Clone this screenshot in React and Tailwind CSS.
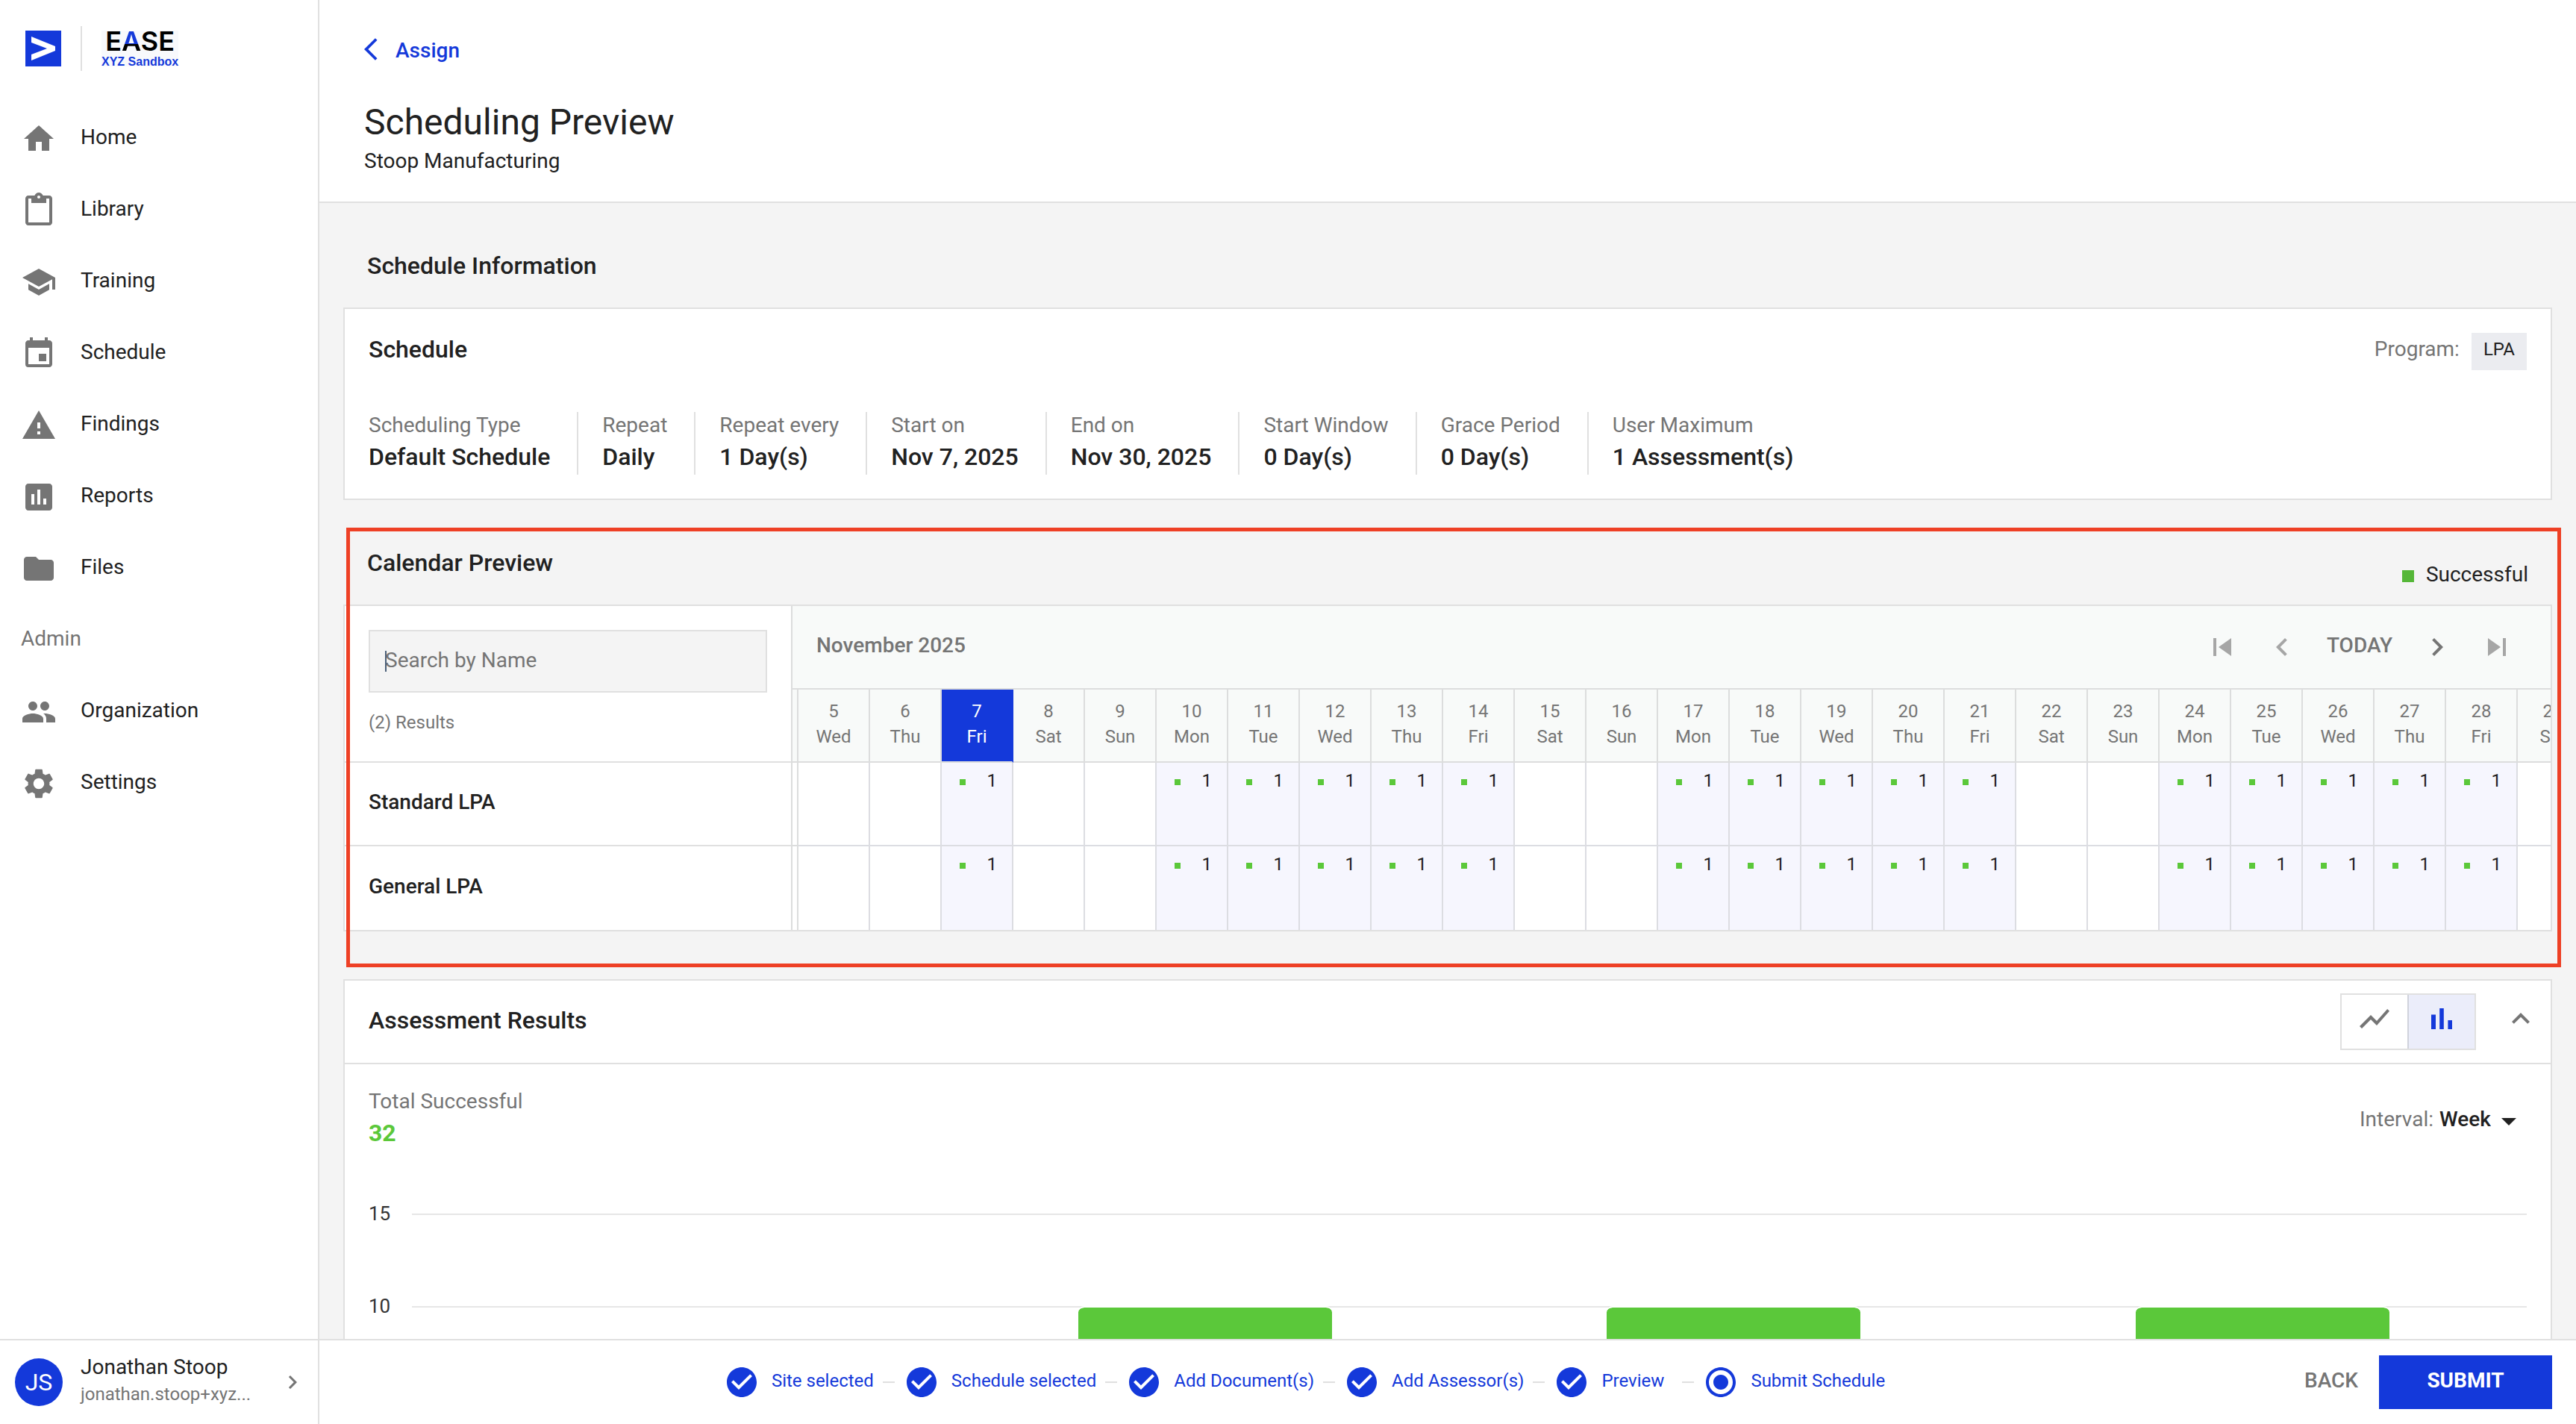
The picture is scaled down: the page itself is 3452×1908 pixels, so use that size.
import React, { useState } from "react";
import {
    MdArrowBackIos,
    MdArrowDropDown,
    MdAssessment,
    MdCheckCircle,
    MdChevronLeft,
    MdChevronRight,
    MdContentPaste,
    MdEvent,
    MdExpandLess,
    MdFolder,
    MdHome,
    MdPeople,
    MdRadioButtonChecked,
    MdSchool,
    MdSettings,
    MdShowChart,
    MdSkipNext,
    MdSkipPrevious,
    MdWarning,
} from "react-icons/md";

const mainLinks = [
    { label: "Home", Icon: MdHome },
    { label: "Library", Icon: MdContentPaste },
    { label: "Training", Icon: MdSchool },
    { label: "Schedule", Icon: MdEvent },
    { label: "Findings", Icon: MdWarning },
    { label: "Reports", Icon: MdAssessment },
    { label: "Files", Icon: MdFolder },
];

const adminLinks = [
    { label: "Organization", Icon: MdPeople },
    { label: "Settings", Icon: MdSettings },
];

const scheduleInfo = [
    { label: "Scheduling Type", value: "Default Schedule" },
    { label: "Repeat", value: "Daily" },
    { label: "Repeat every", value: "1 Day(s)" },
    { label: "Start on", value: "Nov 7, 2025" },
    { label: "End on", value: "Nov 30, 2025" },
    { label: "Start Window", value: "0 Day(s)" },
    { label: "Grace Period", value: "0 Day(s)" },
    { label: "User Maximum", value: "1 Assessment(s)" },
];

const weekdays = ["Sun", "Mon", "Tue", "Wed", "Thu", "Fri", "Sat"];

// Nov 5 - Nov 29, the 1st is a Saturday
const days = Array.from({ length: 25 }, (_, i) => {
    const date = i + 5;
    const weekday = weekdays[(date + 5) % 7];
    return {
        date,
        weekday,
        today: date === 7,
        scheduled: date >= 7 && weekday !== "Sat" && weekday !== "Sun",
    };
});

const documents = ["Standard LPA", "General LPA"];

const weeklyTotals = [2, 10, 10, 10];
const ticks = [15, 10, 5];

const steps = ["Site selected", "Schedule selected", "Add Document(s)", "Add Assessor(s)", "Preview", "Submit Schedule"];

function BarsIcon({ className }) {
    return (
        <svg viewBox="0 0 24 24" fill="currentColor" className={className}>
            <path d="M5 9.2h3V19H5zM10.6 5h2.8v14h-2.8zm5.6 8H19v6h-2.8z" />
        </svg>
    );
}

function NavLink({ label, Icon }) {
    return (
        <a href="#" className="flex h-24 items-center gap-8 pl-7">
            <Icon className="size-12 text-[#757575]" />
            <span className="pb-1">{label}</span>
        </a>
    );
}

function Sidebar() {
    return (
        <aside className="flex w-[428px] shrink-0 flex-col border-r-2 border-[#e0e0e0] bg-white">
            <div className="flex h-[138px] items-start gap-[26px] pt-[35px] pl-[34px]">
                <svg viewBox="0 0 48 48" className="mt-1.5 size-12">
                    <rect width="48" height="48" fill="#1439da" />
                    <path d="M8 8l32 13v6L8 40v-8l21-8L8 16z" fill="#fff" />
                </svg>
                <div className="h-[60px] w-0.5 bg-[#e0e0e0]" />
                <div className="mt-1.5 flex h-12 flex-col items-center bg-[#f8f9fc]">
                    <div className="font-['Inter',sans-serif] text-[36px] leading-7 font-semibold text-black">
                        E
                        <span className="bg-linear-to-b from-[#1439da] from-60% to-black to-60% bg-clip-text text-transparent">A</span>
                        SE
                    </div>
                    <div className="font-['Liberation_Sans',sans-serif] text-base leading-7 font-bold text-[#1439da]">XYZ Sandbox</div>
                </div>
            </div>

            <nav className="flex-1 overflow-hidden">
                {mainLinks.map((link) => (
                    <NavLink key={link.label} {...link} />
                ))}
                <div className="flex h-24 items-center pb-1 pl-7 text-[#757575]">Admin</div>
                {adminLinks.map((link) => (
                    <NavLink key={link.label} {...link} />
                ))}
            </nav>

            <button type="button" className="flex h-[114px] items-center border-t-2 border-[#e0e0e0] pr-4 pl-5 text-left">
                <span className="flex size-16 shrink-0 items-center justify-center rounded-full bg-[#1439da] text-[32px] text-white">JS</span>
                <span className="ml-6 flex-1 pb-1 leading-9">
                    <span className="block">Jonathan Stoop</span>
                    <span className="block text-2xl leading-9 text-[#757575]">jonathan.stoop+xyz...</span>
                </span>
                <MdChevronRight className="size-9 text-[#757575]" />
            </button>
        </aside>
    );
}

function ScheduleCard() {
    return (
        <section className="border-2 border-[#e0e0e0] bg-white p-8">
            <div className="flex h-[50px] items-center justify-between">
                <h3 className="pb-1.5 text-[32px] font-medium">Schedule</h3>
                <div className="flex items-center gap-4">
                    <span className="pb-1.5 text-[#757575]">Program:</span>
                    <span className="flex h-[50px] items-center bg-[#ebecf0] px-4 pb-1.5 text-2xl">LPA</span>
                </div>
            </div>
            <dl className="mt-14 flex divide-x-2 divide-[#e0e0e0]">
                {scheduleInfo.map((item) => (
                    <div key={item.label} className="pr-9 pl-8 first:pl-0">
                        <dt className="leading-9 text-[#757575]">{item.label}</dt>
                        <dd className="text-[32px] leading-12 font-medium">{item.value}</dd>
                    </div>
                ))}
            </dl>
        </section>
    );
}

function CalendarToolbar() {
    return (
        <div className="flex h-28 items-center justify-between border-b-2 border-[#dcdddd] bg-[#f8faf9] pr-12 pl-8 text-[#757575]">
            <h4 className="pb-1 font-medium">November 2025</h4>
            <div className="flex items-center gap-8">
                <button type="button" aria-label="First" disabled className="text-[#a6a6a6]">
                    <MdSkipPrevious className="size-12" />
                </button>
                <button type="button" aria-label="Previous" disabled className="text-[#a6a6a6]">
                    <MdChevronLeft className="size-12" />
                </button>
                <button type="button" className="px-1 pb-1 font-medium">TODAY</button>
                <button type="button" aria-label="Next">
                    <MdChevronRight className="size-12" />
                </button>
                <button type="button" aria-label="Last" disabled className="text-[#a6a6a6]">
                    <MdSkipNext className="size-12" />
                </button>
            </div>
        </div>
    );
}

function CalendarPreview() {
    const [search, setSearch] = useState("");
    const rows = documents.filter((name) => name.toLowerCase().includes(search.toLowerCase()));

    return (
        <section className="relative pt-[60px]">
            <div className="flex h-20 items-start justify-between px-8">
                <h2 className="text-[32px] leading-12 font-medium">Calendar Preview</h2>
                <div className="mt-5 flex items-center gap-4 leading-10">
                    <span className="mt-1 size-4 bg-[#55b738]" />
                    Successful
                </div>
            </div>

            <div className="flex border-2 border-[#e0e0e0] bg-white">
                <div className="w-[600px] shrink-0 border-r-2 border-[#dcdddd]">
                    <div className="h-[210px] border-b-2 border-[#e0e0e0] px-8 pt-8">
                        <div className="relative">
                            <input
                                type="text"
                                aria-label="Search by Name"
                                placeholder="Search by Name"
                                value={search}
                                onChange={(e) => setSearch(e.target.value)}
                                className="block h-[84px] w-full border-2 border-[#e0e0e0] bg-[#f4f4f4] px-5 pb-1 placeholder:text-[#757575] placeholder:opacity-100"
                            />
                            <span className="absolute top-7 left-[22px] h-7 w-0.5 bg-[#4a5f78]" />
                        </div>
                        <p className="mt-5 text-2xl leading-10 text-[#757575]">({rows.length}) Results</p>
                    </div>
                    {rows.map((name) => (
                        <div key={name} className="flex h-28 items-center border-b-2 border-[#e0e0e0] pb-1 pl-8 font-medium last:border-b-0">
                            {name}
                        </div>
                    ))}
                </div>

                <div className="min-w-0 flex-1 overflow-hidden">
                    <CalendarToolbar />
                    <table className="w-[2408px] table-fixed border-separate border-spacing-0 text-2xl">
                        <colgroup>
                            <col className="w-2" />
                            {days.map((day) => (
                                <col key={day.date} className="w-24" />
                            ))}
                        </colgroup>
                        <thead>
                            <tr className="h-[98px]">
                                <td className="border-r-2 border-b-2 border-[#dcdddd] bg-[#f8faf9] p-0" />
                                {days.map((day) => (
                                    <th
                                        key={day.date}
                                        scope="col"
                                        className={`border-b-2 border-b-[#dcdddd] px-0 pt-3 pb-0 align-top leading-[34px] font-normal border-r-2 ${
                                            day.today ? "border-r-[#1439da] bg-[#1439da] text-white" : "border-r-[#dcdddd] bg-[#f8faf9] text-[#757575]"
                                        }`}
                                    >
                                        {day.date}
                                        <br />
                                        {day.weekday}
                                    </th>
                                ))}
                            </tr>
                        </thead>
                        <tbody>
                            {rows.map((name, i) => (
                                <tr key={name} className="h-28">
                                    <td className={`border-r-2 border-[#dcdddd] p-0 ${i < rows.length - 1 ? "border-b-2" : ""}`} />
                                    {days.map((day) => (
                                        <td
                                            key={day.date}
                                            className={`border-r-2 border-[#dcdde2] p-0 align-top ${i < rows.length - 1 ? "border-b-2" : ""} ${
                                                day.scheduled ? "bg-[#f6f6fe]" : ""
                                            }`}
                                        >
                                            {day.scheduled && (
                                                <div className="flex items-center justify-between pt-2 pr-5 pl-6 leading-8">
                                                    <span className="mt-1 size-2 bg-[#5bc83a]" />
                                                    1
                                                </div>
                                            )}
                                        </td>
                                    ))}
                                </tr>
                            ))}
                        </tbody>
                    </table>
                </div>
            </div>

            {/* highlight frame */}
            <div className="pointer-events-none absolute top-[37px] -right-3 -bottom-12 left-1 border-[5px] border-[#ee4025]" />
        </section>
    );
}

function AssessmentResults() {
    const [chart, setChart] = useState("bar");
    const [interval, setChartInterval] = useState("Week");

    return (
        <section className="mt-16 border-2 border-[#e0e0e0] bg-white">
            <div className="flex h-28 items-center justify-between border-b-2 border-[#e0e0e0] pr-4 pl-8">
                <h3 className="pb-1 text-[32px] font-medium">Assessment Results</h3>
                <div className="flex items-center gap-9">
                    <div className="flex h-[76px] divide-x-2 divide-[#d0d3dc] border-2 border-[#e0e0e0]">
                        <button
                            type="button"
                            aria-label="Line chart"
                            onClick={() => setChart("line")}
                            className={`flex w-[90px] items-center justify-center pb-2 ${chart === "line" ? "bg-[#ebedfa] text-[#1439da]" : "text-[#757575]"}`}
                        >
                            <MdShowChart className="size-12" />
                        </button>
                        <button
                            type="button"
                            aria-label="Bar chart"
                            onClick={() => setChart("bar")}
                            className={`flex w-[88px] items-center justify-center pb-2 ${chart === "bar" ? "bg-[#ebedfa] text-[#1439da]" : "text-[#757575]"}`}
                        >
                            <BarsIcon className="size-12" />
                        </button>
                    </div>
                    <button type="button" aria-label="Collapse" className="pb-2 text-[#757575]">
                        <MdExpandLess className="size-12" />
                    </button>
                </div>
            </div>

            <div className="px-8 pt-8">
                <div className="flex items-center justify-between">
                    <div>
                        <div className="leading-9 text-[#757575]">Total Successful</div>
                        <div className="text-[32px] leading-12 font-bold text-[#5bc83a]">32</div>
                    </div>
                    <div className="flex items-center">
                        <label htmlFor="interval" className="mr-2 text-[#757575]">Interval:</label>
                        <select
                            id="interval"
                            value={interval}
                            onChange={(e) => setChartInterval(e.target.value)}
                            className="appearance-none bg-transparent font-medium"
                        >
                            <option>Day</option>
                            <option>Week</option>
                        </select>
                        <MdArrowDropDown className="mt-1 size-12" />
                    </div>
                </div>

                <div className="relative mt-21">
                    {ticks.map((tick) => (
                        <div key={tick} className="flex h-[124px] items-start">
                            <span className="-mt-4 w-[58px] text-[26px] leading-8 text-[#333333]">{tick}</span>
                            <div className="flex-1 border-t-2 border-[#e6e6e6]" />
                        </div>
                    ))}
                    <div className="absolute inset-y-0 right-0 left-[58px] flex items-end">
                        {weeklyTotals.map((total, i) => (
                            <div key={i} className="flex h-full flex-1 items-end justify-center">
                                <div
                                    className="w-[48%] rounded-t-lg border-t-2 border-white bg-[#5bc83a] bg-clip-padding"
                                    style={{ height: `${(total / 15) * 100}%` }}
                                />
                            </div>
                        ))}
                    </div>
                </div>
            </div>
        </section>
    );
}

function Footer() {
    return (
        <footer className="flex h-[114px] shrink-0 items-center border-t-2 border-[#e0e0e0] bg-white pr-8">
            <ol className="flex flex-1 items-center justify-center text-2xl text-[#1439da]">
                {steps.map((step, i) => (
                    <li key={step} className="flex items-center">
                        {i > 0 && <span className="mr-3 ml-3 h-0.5 w-4 bg-[#e0e0e0]" />}
                        {i === steps.length - 1 ? <MdRadioButtonChecked className="size-12" /> : <MdCheckCircle className="size-12" />}
                        <span className="ml-4 min-w-24 pb-1">{step}</span>
                    </li>
                ))}
            </ol>
            <button type="button" className="h-18 pr-7 pb-1 pl-5 font-medium text-[#757575]">BACK</button>
            <button type="button" className="h-18 w-[232px] bg-[#1439da] pb-1 font-bold text-white">SUBMIT</button>
        </footer>
    );
}

function App() {
    return (
        <div className="flex h-screen overflow-hidden bg-white font-['Roboto',sans-serif] text-[28px] leading-10 text-[#212121]">
            <Sidebar />
            <main className="flex min-w-0 flex-1 flex-col">
                <div className="min-h-0 flex-1 overflow-hidden bg-[#f4f4f4]">
                    <header className="h-[272px] border-b-2 border-[#e0e0e0] bg-white px-15 pt-12">
                        <a href="#" className="flex h-9 w-fit items-center gap-1.5 font-medium text-[#1439da]">
                            <MdArrowBackIos className="size-9" />
                            <span className="pt-1">Assign</span>
                        </a>
                        <h1 className="mt-13 text-5xl leading-14">Scheduling Preview</h1>
                        <p className="mt-1">Stoop Manufacturing</p>
                    </header>

                    <div className="px-8 pt-15">
                        <h2 className="mb-8 pl-8 text-[32px] leading-12 font-medium">Schedule Information</h2>
                        <ScheduleCard />
                        <CalendarPreview />
                        <AssessmentResults />
                    </div>
                </div>
                <Footer />
            </main>
        </div>
    );
}

export default App;
